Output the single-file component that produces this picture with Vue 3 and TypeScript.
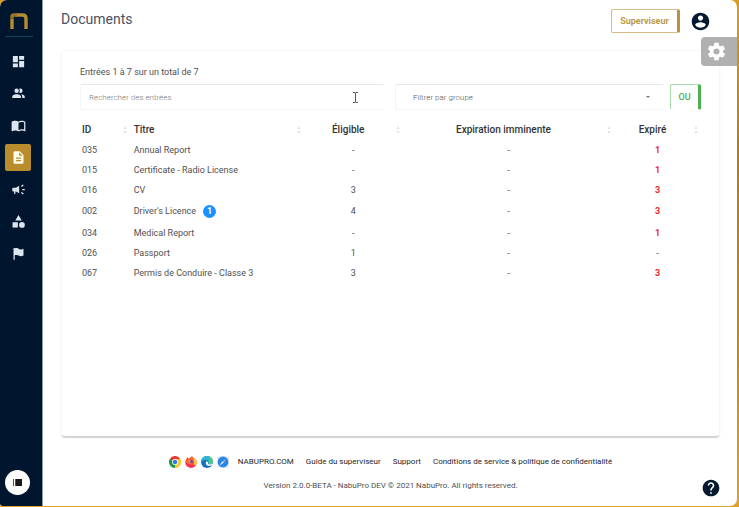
<script setup lang="ts">
import { ref, computed } from 'vue'

interface NavItem {
  label: string
  path: string
  active?: boolean
}

interface DocumentRow {
  id: string
  title: string
  eligible: string
  expiring: string
  expired: string
  badge?: number
}

const navItems: NavItem[] = [
  { label: 'Tableau de bord', path: 'M3 13h8V3H3v10zm0 8h8v-6H3v6zm10 0h8V11h-8v10zm0-18v6h8V3h-8z' },
  {
    label: 'Utilisateurs',
    path: 'M16 17V19H2V17S2 13 9 13 16 17 16 17M12.5 7.5A3.5 3.5 0 1 0 9 11A3.5 3.5 0 0 0 12.5 7.5M15.94 13A5.32 5.32 0 0 1 18 17V19H22V17S22 13.37 15.94 13M15 4A3.39 3.39 0 0 0 13.07 4.59A5 5 0 0 1 13.07 10.41A3.39 3.39 0 0 0 15 11A3.5 3.5 0 0 0 15 4Z',
  },
  {
    label: 'Formations',
    path: 'M21,5C19.89,4.65 18.67,4.5 17.5,4.5C15.55,4.5 13.45,4.9 12,6C10.55,4.9 8.45,4.5 6.5,4.5C4.55,4.5 2.45,4.9 1,6V20.65C1,20.9 1.25,21.15 1.5,21.15C1.6,21.15 1.65,21.1 1.75,21.1C3.1,20.45 5.05,20 6.5,20C8.45,20 10.55,20.4 12,21.5C13.35,20.65 15.8,20 17.5,20C19.15,20 20.85,20.3 22.25,21.05C22.35,21.1 22.4,21.1 22.5,21.1C22.75,21.1 23,20.85 23,20.6V6C22.4,5.55 21.75,5.25 21,5M21,18.5C19.9,18.15 18.7,18 17.5,18C15.8,18 13.35,18.65 12,19.5V8C13.35,7.15 15.8,6.5 17.5,6.5C18.7,6.5 19.9,6.65 21,7V18.5Z',
  },
  {
    label: 'Documents',
    active: true,
    path: 'M14 2H6c-1.1 0-1.99.9-1.99 2L4 20c0 1.1.89 2 1.99 2H18c1.1 0 2-.9 2-2V8l-6-6zm2 16H8v-2h8v2zm0-4H8v-2h8v2zm-3-5V3.5L18.5 9H13z',
  },
  {
    label: 'Annonces',
    path: 'M18 11v2h4v-2h-4zm-2 6.61c.96.71 2.21 1.65 3.2 2.39.4-.53.8-1.07 1.2-1.6-.99-.74-2.24-1.68-3.2-2.4-.4.54-.8 1.08-1.2 1.61zM20.4 5.6c-.4-.53-.8-1.07-1.2-1.6-.99.74-2.24 1.68-3.2 2.4.4.53.8 1.07 1.2 1.6.96-.72 2.21-1.65 3.2-2.4zM4 9c-1.1 0-2 .9-2 2v2c0 1.1.9 2 2 2h1v4h2v-4h1l5 3V6L8 9H4z',
  },
  { label: 'Groupes', path: 'M12 1.5L6.8 10.5h10.4zM2.5 13h8.5v8.5H2.5zM17.5 12.8a4.6 4.6 0 1 0 0 9.2a4.6 4.6 0 1 0 0-9.2z' },
  { label: 'Signalements', path: 'M4 3h2v1c3-1.4 5-.5 7 .6s4 1.2 7-.4v11c-3 1.6-5 1.4-7 .4s-4.5-1.8-7-.6V22H4z' },
]

const rows: DocumentRow[] = [
  { id: '035', title: 'Annual Report', eligible: '-', expiring: '-', expired: '1' },
  { id: '015', title: 'Certificate - Radio License', eligible: '-', expiring: '-', expired: '1' },
  { id: '016', title: 'CV', eligible: '3', expiring: '-', expired: '3' },
  { id: '002', title: "Driver's Licence", eligible: '4', expiring: '-', expired: '3', badge: 1 },
  { id: '034', title: 'Medical Report', eligible: '-', expiring: '-', expired: '1' },
  { id: '026', title: 'Passport', eligible: '1', expiring: '-', expired: '-' },
  { id: '067', title: 'Permis de Conduire - Classe 3', eligible: '3', expiring: '-', expired: '3' },
]

const columns = ['ID', 'Titre', 'Éligible', 'Expiration imminente', 'Expiré']

const query = ref('')
const visibleRows = computed(() =>
  rows.filter((r) => (r.id + ' ' + r.title).toLowerCase().includes(query.value.toLowerCase())),
)
</script>

<template>
  <div class="backdrop">
    <div class="window">
      <nav class="sidebar" aria-label="Navigation principale">
        <a class="brand" href="#" aria-label="NabuPro">
          <svg viewBox="0 0 18 16" width="18" height="16">
            <path d="M2 16V5.5M5.5 2H12.5Q16 2 16 5.5V16" fill="none" stroke="#b48c34" stroke-width="3.4" />
            <path d="M2 5.5V3.5Q2 2 4 2H7" fill="none" stroke="#9a7426" stroke-width="3.4" />
          </svg>
        </a>
        <a
          v-for="item in navItems"
          :key="item.label"
          href="#"
          class="nav-item"
          :class="{ active: item.active }"
          :aria-label="item.label"
        >
          <svg viewBox="0 0 24 24" width="15" height="15"><path :d="item.path" fill="currentColor" /></svg>
        </a>
        <button class="toggle" type="button" aria-label="Basculer le menu">
          <svg viewBox="0 0 9 7" width="9" height="7">
            <path d="M0 0H1V7H0zM2 0H3V7H2z" fill="#555" />
            <path d="M3 0H9V7H3z" fill="#181818" />
          </svg>
        </button>
      </nav>

      <div class="page">
        <header class="topbar">
          <h1>Documents</h1>
          <button class="role" type="button">Superviseur</button>
          <button class="icon-button" type="button" aria-label="Compte">
            <svg viewBox="0 0 24 24" width="21" height="21">
              <path
                d="M12 2C6.48 2 2 6.48 2 12s4.48 10 10 10 10-4.48 10-10S17.52 2 12 2zm0 3c1.66 0 3 1.34 3 3s-1.34 3-3 3-3-1.34-3-3 1.34-3 3-3zm0 14.2c-2.5 0-4.71-1.28-6-3.22.03-1.99 4-3.08 6-3.08 1.99 0 5.97 1.09 6 3.08-1.29 1.94-3.5 3.22-6 3.22z"
                fill="#04182f"
              />
            </svg>
          </button>
        </header>

        <main class="card">
          <p class="summary">Entrées 1 à 7 sur un total de 7</p>
          <div class="filters">
            <div class="search">
              <input v-model="query" type="text" placeholder="Rechercher des entrées" aria-label="Rechercher des entrées" />
              <svg class="caret" viewBox="0 0 7 11" width="7" height="11">
                <path d="M1 .5H3L3.5 1L4 .5H6M3.5 1V10M1 10.5H3L3.5 10L4 10.5H6" fill="none" stroke="#555" />
              </svg>
            </div>
            <div class="group">
              <select aria-label="Filtrer par groupe">
                <option>Filtrer par groupe</option>
              </select>
              <svg class="arrow" viewBox="0 0 4 2" width="4" height="2"><path d="M0 0H4L2 2z" fill="#777" /></svg>
            </div>
            <button class="operator" type="button">OU</button>
          </div>

          <table>
            <thead>
              <tr>
                <th v-for="(name, i) in columns" :key="name" :class="'col-' + i">
                  <span class="head">
                    <span class="name">{{ name }}</span>
                    <svg viewBox="0 0 4 8" width="4" height="8">
                      <path d="M2 0L3.5 3H.5zM2 8L.5 5H3.5z" fill="#e2e2e2" />
                    </svg>
                  </span>
                </th>
              </tr>
            </thead>
            <tbody>
              <tr v-for="row in visibleRows" :key="row.id">
                <td>{{ row.id }}</td>
                <td>
                  <span class="title">{{ row.title }}<span v-if="row.badge" class="badge">{{ row.badge }}</span></span>
                </td>
                <td>{{ row.eligible }}</td>
                <td>{{ row.expiring }}</td>
                <td :class="{ expired: row.expired !== '-' }">{{ row.expired }}</td>
              </tr>
            </tbody>
          </table>
        </main>

        <footer>
          <div class="links">
            <span class="browsers">
              <svg viewBox="0 0 24 24" width="12" height="12">
                <path d="M12 12L1.6 6A12 12 0 0 1 22.4 6z" fill="#e33b2e" />
                <path d="M12 12L22.4 6A12 12 0 0 1 12 24z" fill="#fcc934" />
                <path d="M12 12V24A12 12 0 0 1 1.6 6z" fill="#1e9647" />
                <path d="M12 6.5H22.6A12 12 0 0 1 12 24L17 14.5z" fill="#fcc934" />
                <circle cx="12" cy="12" r="5.8" fill="#fff" />
                <circle cx="12" cy="12" r="4.4" fill="#3279e4" />
              </svg>
              <svg viewBox="0 0 24 24" width="12" height="12">
                <path d="M3 5L5 2L7 5Q12 3 14 0Q17 4 20 5Q24 9 23.5 14A11.6 11.2 0 0 1 .5 13Q.5 8 3 5z" fill="#ff5a30" />
                <path d="M14 0Q16 4 20 6Q24 9 23.5 14Q22 20 17 22Q21 12 14 0z" fill="#ffc936" />
                <path d="M1 13Q3 23 13 23.5Q20 22 22 17Q13 21 1 13z" fill="#f52c61" />
                <circle cx="12" cy="11.5" r="4" fill="#8a43b4" />
                <path d="M5 9Q9 6 12 9L9 12Q10 15 15 15Q7 18 5 9z" fill="#ff8e2e" />
              </svg>
              <svg viewBox="0 0 24 24" width="12" height="12">
                <circle cx="12" cy="12" r="12" fill="#1372bd" />
                <path d="M0 11A12 12 0 0 1 24 12Q24 17 18 17Q14 17 15 14Q15 7 8 8Q3 8 0 11z" fill="#30b4d0" />
                <path d="M15 1Q24 3 24 12Q23 17 18 17Q14 16 15 14Q20 8 15 1z" fill="#56ca7a" />
                <path d="M10 11Q8 19 16 20Q20 20 23 17Q24 14 21 16Q13 19 14 13Q13 10 10 11z" fill="#fff" />
              </svg>
              <svg viewBox="0 0 24 24" width="12" height="12">
                <rect width="24" height="24" rx="5" fill="#e6ebf0" />
                <circle cx="12" cy="12" r="10.8" fill="#2587e6" />
                <path d="M19 5L10.5 10.5L13.5 13.5z" fill="#c8a0b8" />
                <path d="M5 19L10.5 10.5L13.5 13.5z" fill="#dcecfc" />
              </svg>
            </span>
            <a href="#">NABUPRO.COM</a>
            <a href="#">Guide du superviseur</a>
            <a href="#">Support</a>
            <a href="#">Conditions de service &amp; politique de confidentialité</a>
          </div>
          <p>Version 2.0.0-BETA - NabuPro DEV © 2021 NabuPro. All rights reserved.</p>
        </footer>
      </div>

      <button class="settings" type="button" aria-label="Paramètres">
        <svg viewBox="0 0 24 24" width="21" height="21">
          <path
            d="M12,15.5A3.5,3.5 0 0,1 8.5,12A3.5,3.5 0 0,1 12,8.5A3.5,3.5 0 0,1 15.5,12A3.5,3.5 0 0,1 12,15.5M19.43,12.97C19.47,12.65 19.5,12.33 19.5,12C19.5,11.67 19.47,11.34 19.43,11L21.54,9.37C21.73,9.22 21.78,8.95 21.66,8.73L19.66,5.27C19.54,5.05 19.27,4.96 19.05,5.05L16.56,6.05C16.04,5.66 15.5,5.32 14.87,5.07L14.5,2.42C14.46,2.18 14.25,2 14,2H10C9.75,2 9.54,2.18 9.5,2.42L9.13,5.07C8.5,5.32 7.96,5.66 7.44,6.05L4.95,5.05C4.73,4.96 4.46,5.05 4.34,5.27L2.34,8.73C2.21,8.95 2.27,9.22 2.46,9.37L4.57,11C4.53,11.34 4.5,11.67 4.5,12C4.5,12.33 4.53,12.65 4.57,12.97L2.46,14.63C2.27,14.78 2.21,15.05 2.34,15.27L4.34,18.73C4.46,18.95 4.73,19.03 4.95,18.95L7.44,17.94C7.96,18.34 8.5,18.68 9.13,18.93L9.5,21.58C9.54,21.82 9.75,22 10,22H14C14.25,22 14.46,21.82 14.5,21.58L14.87,18.93C15.5,18.67 16.04,18.34 16.56,17.94L19.05,18.95C19.27,19.03 19.54,18.95 19.66,18.73L21.66,15.27C21.78,15.05 21.73,14.78 21.54,14.63L19.43,12.97Z"
            fill="#fff"
          />
        </svg>
      </button>
      <button class="help icon-button" type="button" aria-label="Aide">
        <svg viewBox="0 0 24 24" width="20" height="20">
          <path
            d="M12 2C6.48 2 2 6.48 2 12s4.48 10 10 10 10-4.48 10-10S17.52 2 12 2zm1 17h-2v-2h2v2zm2.07-7.75l-.9.92C13.45 12.9 13 13.5 13 15h-2v-.5c0-1.1.45-2.1 1.17-2.83l1.24-1.26c.37-.36.59-.86.59-1.41 0-1.1-.9-2-2-2s-2 .9-2 2H8c0-2.21 1.79-4 4-4s4 1.79 4 4c0 .88-.36 1.68-.93 2.25z"
            fill="#04182f"
          />
        </svg>
      </button>
    </div>
  </div>
</template>

<style>
body {
  margin: 0;
}
</style>

<style scoped>
* {
  box-sizing: border-box;
}

.backdrop {
  min-height: 100vh;
  display: flex;
  padding: 0 2px 1px 0;
  background: linear-gradient(180deg, #dc9a26, #b97a16 30%, #c98618 70%, #e0a030);
  font-family: Roboto, 'Liberation Sans', sans-serif;
  font-size: 9px;
  line-height: 12px;
  color: #505050;
}

.window {
  position: relative;
  flex: 1;
  display: flex;
  background: #fff;
  border-radius: 7px 7px 7px 3px;
  overflow: hidden;
}

svg {
  display: block;
  flex: none;
}

button {
  font-family: inherit;
  cursor: pointer;
  padding: 0;
}

a {
  color: inherit;
  text-decoration: none;
}

.sidebar {
  flex: none;
  width: 43px;
  display: flex;
  flex-direction: column;
  align-items: flex-start;
  gap: 5px;
  padding: 0 0 11px 5px;
  background: #00162f;
  border-right: 1px solid #8b9cae;
}

.brand {
  width: 28px;
  height: 37px;
  margin-bottom: 6px;
  padding: 13px 5px 0;
  border-bottom: 1px solid #11445f;
}

.nav-item {
  width: 26px;
  height: 27px;
  display: grid;
  place-items: center;
  border-radius: 2px;
  color: #dde6ee;
}

.nav-item.active {
  background: #b98d2c;
  color: #fffbe8;
}

.toggle {
  width: 25px;
  height: 25px;
  margin-top: auto;
  display: grid;
  place-items: center;
  border: 0;
  border-radius: 50%;
  background: #fff;
}

.page {
  flex: 1;
  min-width: 0;
  display: flex;
  flex-direction: column;
  padding: 0 17px 0 18px;
}

.topbar {
  display: flex;
  align-items: center;
  height: 50px;
  padding: 0 9px 8px 0;
}

h1 {
  flex: 1;
  margin: 0;
  padding-bottom: 4px;
  font-size: 14px;
  line-height: 18px;
  font-weight: 400;
  color: #4c5162;
}

.role {
  width: 69px;
  height: 24px;
  margin-right: 10px;
  border: 1px solid #d6bd86;
  border-right: 3px solid #b8933c;
  border-radius: 2px;
  background: #fff;
  font-size: 9px;
  font-weight: 700;
  color: #bd9a48;
}

.icon-button {
  border: 0;
  background: none;
}

.card {
  flex: 1;
  padding: 15px 18px;
  border: 1px solid #f7f7f7;
  border-bottom-color: #d0d0d0;
  border-radius: 4px;
  box-shadow: 0 1px 1px #d4d4d4;
}

.summary {
  margin: 0 0 6px;
}

.filters {
  display: flex;
  height: 26px;
  margin-bottom: 9px;
}

.search {
  position: relative;
  flex: 305;
  margin-right: 10px;
}

.group {
  position: relative;
  flex: 269;
  margin-right: 6px;
}

.search input,
.group select {
  width: 100%;
  height: 26px;
  border: 1px solid #f4f4f4;
  border-top-color: #e9e9e9;
  border-right-color: #fff;
  border-radius: 2px;
  background: #fff;
  font-family: inherit;
  font-size: 8px;
  font-weight: 300;
  color: #555;
  appearance: none;
  outline: 0;
}

.search input {
  padding: 0 8px;
}

.group select {
  padding: 0 17px;
}

.search input::placeholder {
  color: #777;
}

.caret {
  position: absolute;
  right: 26px;
  top: 8px;
}

.arrow {
  position: absolute;
  right: 14px;
  top: 12px;
}

.operator {
  width: 31px;
  height: 26px;
  border: 1px solid #a9d9ab;
  border-right: 3px solid #4caf50;
  border-bottom-color: #fff;
  border-radius: 2px;
  background: #fff;
  font-size: 9px;
  font-weight: 500;
  color: #4caf50;
}

table {
  width: 100%;
  height: 164px;
  table-layout: fixed;
  border-collapse: collapse;
}

th,
td {
  padding: 0;
  text-align: center;
  white-space: nowrap;
}

th {
  height: 21px;
  font-size: 10px;
  font-weight: 500;
  color: #333;
}

.head {
  display: flex;
  align-items: center;
  padding-right: 3px;
}

.name {
  flex: 1;
  padding-right: 3px;
}

.col-0 {
  width: 8%;
}

.col-1 {
  width: 28%;
}

.col-2 {
  width: 16%;
}

.col-3 {
  width: 34%;
}

.col-4 {
  width: 14%;
}

th:first-child,
td:first-child {
  padding-left: 2px;
  text-align: left;
}

th:nth-child(2),
td:nth-child(2) {
  padding-left: 4px;
  text-align: left;
}

.title {
  display: inline-flex;
  align-items: center;
  gap: 7px;
}

.badge {
  width: 13px;
  height: 13px;
  border-radius: 50%;
  background: #1890ff;
  color: #fff;
  font-size: 9px;
  line-height: 13px;
  font-weight: 700;
  text-align: center;
}

.expired {
  color: #f02d2d;
  font-weight: 700;
}

footer {
  height: 69px;
  padding-top: 19px;
  display: flex;
  flex-direction: column;
  align-items: center;
  gap: 12px;
  font-size: 8px;
}

.links {
  display: flex;
  align-items: center;
  gap: 12px;
  color: #262626;
  white-space: nowrap;
}

.browsers {
  display: flex;
  gap: 4px;
  margin-right: -3px;
}

footer p {
  margin: 0;
}

.settings {
  position: absolute;
  right: 0;
  top: 37px;
  width: 36px;
  height: 29px;
  padding-left: 5px;
  border: 0;
  border-radius: 4px 0 0 4px;
  background: #b0b0b0;
}

.help {
  position: absolute;
  right: 16px;
  bottom: 8px;
}
</style>
